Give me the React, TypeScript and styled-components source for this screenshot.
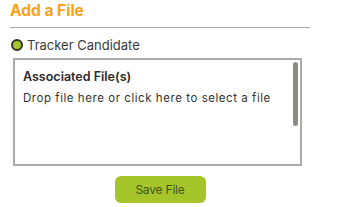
import React from "react";
import styled, { createGlobalStyle } from "styled-components";

const Global = createGlobalStyle`
  html, body { margin: 0; padding: 0; background: #fff; }
  body { font-family: "Inter", "Open Sans", sans-serif; }
`;

const Page = styled.div`
  width: 337px;
  height: 207px;
  box-sizing: border-box;
  padding: 1px 27px 0 10px;
  display: flex;
  flex-direction: column;
`;

const Title = styled.h2`
  margin: 0;
  font-family: "Inter", sans-serif;
  font-weight: 700;
  font-size: 15.5px;
  color: #f8a21c;
  line-height: 20px;
  padding-bottom: 6px;
  border-bottom: 1px solid #a9a9a9;
`;

const RadioRow = styled.label`
  display: flex;
  align-items: center;
  gap: 4px;
  margin-top: 10px;
  padding-left: 1px;
  font-family: "Inter", sans-serif;
  font-size: 13px;
  color: #3a3a3a;
  height: 14px;
`;

const RadioDot = styled.span`
  width: 8px;
  height: 8px;
  border-radius: 50%;
  border: 2px solid #33332a;
  background: #a6c62a;
`;

const DropBox = styled.div`
  position: relative;
  margin: 6px 8px 0 3px;
  height: 108px;
  border: 2px solid #ababab;
  padding: 9px 8px 0;
  box-sizing: border-box;
`;

const BoxTitle = styled.div`
  font-family: "Inter", sans-serif;
  font-weight: 600;
  font-size: 12.5px;
  color: #2b2b2b;
  line-height: 16px;
`;

const BoxText = styled.div`
  margin-top: 7px;
  font-family: "Inter", sans-serif;
  font-size: 11.5px;
  letter-spacing: 0.55px;
  color: #333;
  line-height: 12px;
`;

const Scroll = styled.div`
  position: absolute;
  right: 2px;
  top: 2px;
  width: 5px;
  height: 64px;
  border-radius: 3px;
  background: #8a8e80;
`;

const ButtonRow = styled.div`
  display: flex;
  justify-content: center;
  margin-top: 10px;
`;

const SaveButton = styled.button`
  width: 91px;
  height: 27px;
  border: none;
  border-radius: 6px;
  background: #a6c52b;
  color: #3d5518;
  font-family: "Inter", sans-serif;
  font-size: 12px;
  letter-spacing: -0.2px;
  cursor: pointer;
`;

export default function App() {
  return (
    <>
      <Global />
      <Page>
        <Title>Add a File</Title>
        <RadioRow>
          <RadioDot />
          Tracker Candidate
        </RadioRow>
        <DropBox>
          <BoxTitle>Associated File(s)</BoxTitle>
          <BoxText>Drop file here or click here to select a file</BoxText>
          <Scroll />
        </DropBox>
        <ButtonRow>
          <SaveButton>Save File</SaveButton>
        </ButtonRow>
      </Page>
    </>
  );
}
